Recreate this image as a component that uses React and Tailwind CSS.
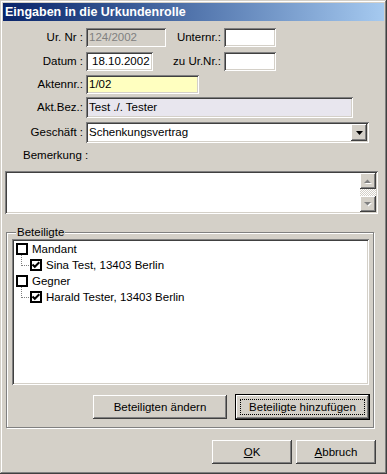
import React from "react";

const sunken =
  "shadow-[inset_1px_1px_0_#808080,inset_-1px_-1px_0_#ffffff,inset_2px_2px_0_#404040,inset_-2px_-2px_0_#d4d0c8]";
const raised =
  "shadow-[inset_-1px_-1px_0_#404040,inset_1px_1px_0_#ffffff,inset_-2px_-2px_0_#808080,inset_2px_2px_0_#d4d0c8]";

function Field({ className = "", children }) {
  return (
    <div className={`h-full flex items-center pl-[3px] ${sunken} ${className}`}>
      {children}
    </div>
  );
}

function Check({ checked }) {
  return (
    <div className="w-[12px] h-[12px] border-2 border-black bg-white flex items-center justify-center shrink-0">
      {checked && (
        <svg width="8" height="8" viewBox="0 0 8 8">
          <polyline points="0.5,3.5 2.8,5.8 7.3,1.3" fill="none" stroke="#000" strokeWidth="2" />
        </svg>
      )}
    </div>
  );
}

function Button({ children, className = "" }) {
  return (
    <div className={`h-[24px] bg-[#d4d0c8] flex items-center justify-center ${raised} ${className}`}>
      {children}
    </div>
  );
}

function ScrollBtn({ up }) {
  return (
    <div className={`w-[16px] h-[16px] bg-[#d4d0c8] flex items-center justify-center ${raised}`}>
      <svg width="8" height="5" viewBox="0 0 8 5">
        {up ? (
          <>
            <polygon points="1,5 8,5 4.5,1.5" fill="#fff" />
            <polygon points="0,4 7,4 3.5,0.5" fill="#808080" />
          </>
        ) : (
          <>
            <polygon points="1,1 8,1 4.5,4.5" fill="#fff" />
            <polygon points="0,0 7,0 3.5,3.5" fill="#808080" />
          </>
        )}
      </svg>
    </div>
  );
}

export default function App() {
  return (
    <div className="w-[387px] h-[474px] bg-[#d4d0c8] p-[3px] flex flex-col font-['Liberation_Sans',Arial,sans-serif] text-[11.5px] leading-[13px] text-black shadow-[inset_-1px_-1px_0_#404040,inset_1px_1px_0_#d4d0c8,inset_-2px_-2px_0_#808080,inset_2px_2px_0_#ffffff]">
      <div className="h-[18px] shrink-0 flex items-center pl-[2px] bg-linear-to-r from-[#0a246a] to-[#a6caf0] text-white font-bold text-[12.5px]">
        Eingaben in die Urkundenrolle
      </div>

      <div className="mt-[7px] h-[19px] flex items-center">
        <div className="w-[80px] text-right">Ur. Nr :</div>
        <Field className="ml-[3px] w-[80px] bg-[#d4d0c8] text-[#808080]">124/2002</Field>
        <div className="w-[55px] text-right">Unternr.:</div>
        <Field className="ml-[3px] w-[52px] bg-white" />
      </div>

      <div className="mt-[5px] h-[19px] flex items-center">
        <div className="w-[80px] text-right">Datum :</div>
        <Field className="ml-[3px] w-[67px] bg-white pl-[6px]">18.10.2002</Field>
        <div className="w-[68px] text-right">zu Ur.Nr.:</div>
        <Field className="ml-[3px] w-[52px] bg-white" />
      </div>

      <div className="mt-[4px] h-[19px] flex items-center">
        <div className="w-[80px] text-right">Aktennr.:</div>
        <Field className="ml-[3px] w-[113px] bg-[#ffffc0]">1/02</Field>
      </div>

      <div className="mt-[3px] h-[21px] flex items-center">
        <div className="w-[80px] text-right">Akt.Bez.:</div>
        <Field className="ml-[3px] w-[267px] bg-[#e8e6ee]">Test ./. Tester</Field>
      </div>

      <div className="mt-[4px] h-[21px] flex items-center">
        <div className="w-[80px] text-right">Geschäft :</div>
        <div className={`ml-[3px] w-[283px] h-full bg-white flex items-center p-[2px] ${sunken}`}>
          <div className="flex-1 pl-[1px]">Schenkungsvertrag</div>
          <div className={`w-[16px] h-full bg-[#d4d0c8] flex items-center justify-center ${raised}`}>
            <svg width="7" height="4" viewBox="0 0 7 4">
              <polygon points="0,0 7,0 3.5,4" fill="#000" />
            </svg>
          </div>
        </div>
      </div>

      <div className="mt-[6px] pl-[20px] h-[13px]">Bemerkung :</div>

      <div className={`mt-[9px] ml-[2px] w-[373px] h-[43px] bg-white flex justify-end p-[2px] ${sunken}`}>
        <div className="w-[16px] h-full flex flex-col">
          <ScrollBtn up />
          <div className="flex-1 bg-[repeating-conic-gradient(#ffffff_0_25%,#d4d0c8_0_50%)] bg-size-[2px_2px]" />
          <ScrollBtn />
        </div>
      </div>

      <div className="relative mt-[18px] ml-[3px] w-[368px] h-[196px] shrink-0 border border-[#808080] shadow-[1px_1px_0_#ffffff,inset_1px_1px_0_#ffffff] pt-[6px] pl-[5px] pr-[4px]">
        <div className="absolute left-[9px] -top-[7px] px-[1px] bg-[#d4d0c8]">Beteiligte</div>
        <div className={`w-[357px] h-[146px] bg-white p-[2px] pt-[2px] ${sunken}`}>
          <div className="h-[16px] flex items-center pl-[2px]">
            <Check />
            <span className="ml-[4px]">Mandant</span>
          </div>
          <div className="h-[16px] flex items-center pl-[2px]">
            <div className="self-start -mt-[2px] ml-[5px] w-[8px] h-[11px] border-l border-b border-dotted border-[#808080]" />
            <div className="ml-[1px]">
              <Check checked />
            </div>
            <span className="ml-[4px]">Sina Test, 13403 Berlin</span>
          </div>
          <div className="h-[16px] flex items-center pl-[2px]">
            <Check />
            <span className="ml-[4px]">Gegner</span>
          </div>
          <div className="h-[16px] flex items-center pl-[2px]">
            <div className="self-start -mt-[2px] ml-[5px] w-[8px] h-[11px] border-l border-b border-dotted border-[#808080]" />
            <div className="ml-[1px]">
              <Check checked />
            </div>
            <span className="ml-[4px]">Harald Tester, 13403 Berlin</span>
          </div>
        </div>
        <div className="mt-[9px] h-[26px] flex items-center justify-end gap-[8px] -mr-[1px]">
          <Button className="w-[134px]">Beteiligten ändern</Button>
          <div className="w-[135px] h-[26px] border border-black">
            <Button className="w-full">
              <div className="w-[125px] h-[16px] flex items-center justify-center border border-dotted border-black">
                Beteiligte hinzufügen
              </div>
            </Button>
          </div>
        </div>
      </div>

      <div className="mt-[12px] flex justify-end gap-[4px] pr-[8px]">
        <Button className="w-[80px]">
          <span>
            <span className="underline">O</span>K
          </span>
        </Button>
        <Button className="w-[80px]">
          <span>
            <span className="underline">A</span>bbruch
          </span>
        </Button>
      </div>
    </div>
  );
}
